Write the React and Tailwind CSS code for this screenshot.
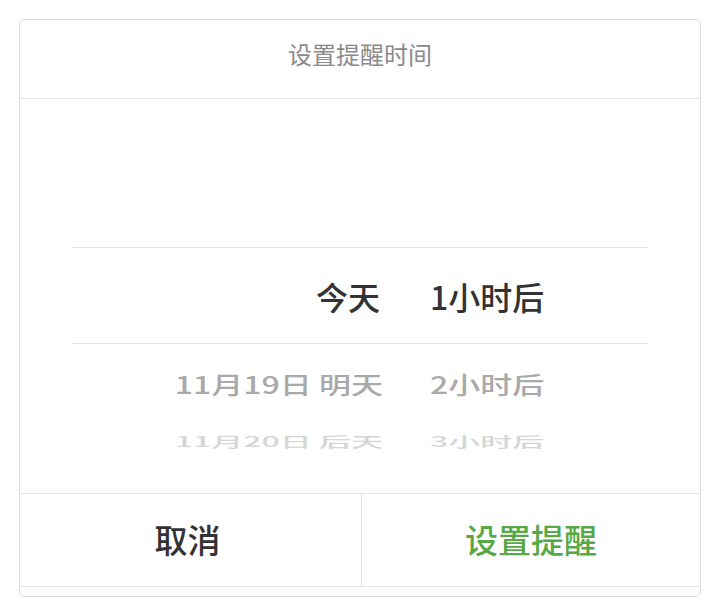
import React from "react";

const rows = [
  { date: "11月19日 明天", hour: "2小时后", cls: "h-[80px] text-[#a9a9a9] scale-y-[0.74]" },
  { date: "11月20日 后天", hour: "3小时后", cls: "h-[34px] text-[#d6d6d6] scale-y-[0.44]" },
];

export default function App() {
  return (
    <div className="w-[720px] h-[616px] bg-white pt-[19px] pl-[19px] font-['Noto_Sans_CJK_SC',sans-serif]">
      <div className="w-[682px] h-[578px] border border-[#dcdcdc] rounded-[5px] flex flex-col">
        <div className="h-[79px] shrink-0 border-b border-[#e8e8e8] flex justify-center pt-[19px]">
          <span className="text-[24px] leading-[30px] text-[#8a8a8a]">设置提醒时间</span>
        </div>

        <div className="flex-1 px-[52px] pt-[148px]">
          <div className="h-[97px] border-y border-[#e6e6e6] grid grid-cols-[311px_1fr] gap-x-[47px] items-center text-[32px] font-medium text-[#333]">
            <span className="text-right pr-[3px]">今天</span>
            <span>1小时后</span>
          </div>
          <div className="h-[114px]">
            {rows.map((r) => (
              <div
                key={r.date}
                className={`grid grid-cols-[311px_1fr] gap-x-[47px] items-center text-[32px] leading-[34px] font-medium ${r.cls}`}
              >
                <span className="text-right">{r.date}</span>
                <span>{r.hour}</span>
              </div>
            ))}
          </div>
        </div>

        <div className="h-[94px] shrink-0 border-y border-[#e6e6e6] flex text-[33px] font-medium">
          <button className="w-[341px] flex items-center justify-center pr-[6px] text-[#333]">取消</button>
          <button className="flex-1 border-l border-[#e6e6e6] flex items-center justify-center text-[#58a846]">
            设置提醒
          </button>
        </div>
        <div className="h-[9px] shrink-0" />
      </div>
    </div>
  );
}
